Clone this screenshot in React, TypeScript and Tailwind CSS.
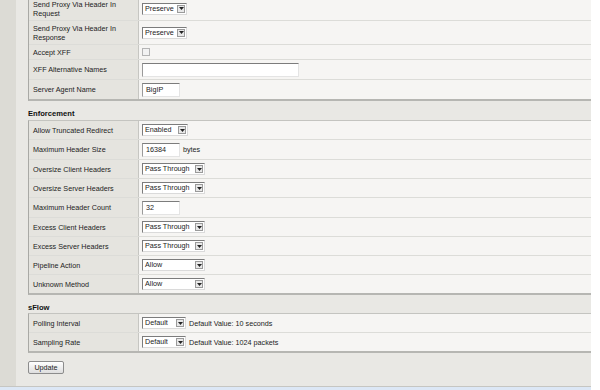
import React from "react";

type Field =
  | { kind: "select"; value: string; w: number }
  | { kind: "input"; value: string; w: number; suffix?: string }
  | { kind: "check" }
  | { kind: "selectNote"; value: string; note: string };

type Row = { label: string; h: number; field: Field };

const Arrow = () => (
  <svg width="5" height="3" viewBox="0 0 5 3">
    <polygon points="0,0 5,0 2.5,3" fill="#222" />
  </svg>
);

const Select = ({ value, w }: { value: string; w: number }) => (
  <div
    className="flex h-[12px] items-center bg-white border border-t-[#7c7c7c] border-l-[#7c7c7c] border-r-[#dadada] border-b-[#dadada]"
    style={{ width: w }}
  >
    <span className="flex-1 pl-[2px] leading-[10px] text-[#222]">{value}</span>
    <div className="mr-[1px] flex h-[8px] w-[8px] items-center justify-center border border-[#9a9a9a] bg-[#e8e8e8]">
      <Arrow />
    </div>
  </div>
);

const Input = ({ value, w }: { value: string; w: number }) => (
  <div
    className="flex h-[14px] items-center bg-white border border-t-[#7c7c7c] border-l-[#9a9a9a] border-r-[#e4e4e4] border-b-[#e4e4e4] pl-[3px] text-[#222]"
    style={{ width: w }}
  >
    {value}
  </div>
);

const FieldCell = ({ field }: { field: Field }) => {
  if (field.kind === "select") return <Select value={field.value} w={field.w} />;
  if (field.kind === "check")
    return <div className="h-[8px] w-[8px] border border-[#b4b4b4] bg-[#f2f2f2]" />;
  if (field.kind === "selectNote")
    return (
      <div className="flex items-center gap-[3px]">
        <Select value={field.value} w={44} />
        <span className="text-[#222]">{field.note}</span>
      </div>
    );
  return (
    <div className="flex items-center gap-[3px]">
      <Input value={field.value} w={field.w} />
      {field.suffix && <span className="text-[#222]">{field.suffix}</span>}
    </div>
  );
};

const Table = ({ rows, top }: { rows: Row[]; top?: boolean }) => (
  <div
    className={
      "border-l border-l-[#a9a9a5] border-b-2 border-b-[#b6b6b2] " +
      (top ? "border-t border-t-[#c4c4c0]" : "")
    }
  >
    {rows.map((r, i) => (
      <div
        key={r.label}
        className={
          "flex " + (i < rows.length - 1 ? "border-b border-[#dcdcd8]" : "")
        }
        style={{ height: r.h }}
      >
        <div className="flex w-[110px] shrink-0 items-center border-r border-[#c6c6c2] bg-[#e5e4df] pl-[4px] pr-[20px] text-[#222]">
          {r.label}
        </div>
        <div className="flex flex-1 items-center bg-[#f6f5f3] pl-[3px]">
          <FieldCell field={r.field} />
        </div>
      </div>
    ))}
  </div>
);

const general: Row[] = [
  { label: "Send Proxy Via Header In Request", h: 24, field: { kind: "select", value: "Preserve", w: 45 } },
  { label: "Send Proxy Via Header In Response", h: 24, field: { kind: "select", value: "Preserve", w: 45 } },
  { label: "Accept XFF", h: 15, field: { kind: "check" } },
  { label: "XFF Alternative Names", h: 20, field: { kind: "input", value: "", w: 157 } },
  { label: "Server Agent Name", h: 19, field: { kind: "input", value: "BigIP", w: 38 } },
];

const enforcement: Row[] = [
  { label: "Allow Truncated Redirect", h: 19, field: { kind: "select", value: "Enabled", w: 46 } },
  { label: "Maximum Header Size", h: 20, field: { kind: "input", value: "16384", w: 38, suffix: "bytes" } },
  { label: "Oversize Client Headers", h: 19, field: { kind: "select", value: "Pass Through", w: 63 } },
  { label: "Oversize Server Headers", h: 19, field: { kind: "select", value: "Pass Through", w: 63 } },
  { label: "Maximum Header Count", h: 20, field: { kind: "input", value: "32", w: 38 } },
  { label: "Excess Client Headers", h: 19, field: { kind: "select", value: "Pass Through", w: 63 } },
  { label: "Excess Server Headers", h: 19, field: { kind: "select", value: "Pass Through", w: 63 } },
  { label: "Pipeline Action", h: 19, field: { kind: "select", value: "Allow", w: 63 } },
  { label: "Unknown Method", h: 18, field: { kind: "select", value: "Allow", w: 63 } },
];

const sflow: Row[] = [
  { label: "Polling Interval", h: 19, field: { kind: "selectNote", value: "Default", note: "Default Value: 10 seconds" } },
  { label: "Sampling Rate", h: 18, field: { kind: "selectNote", value: "Default", note: "Default Value: 1024 packets" } },
];

export default function App() {
  return (
    <div className="h-[390px] w-[600px] overflow-hidden bg-white font-['Liberation_Sans',Arial,sans-serif] text-[7.2px] leading-[9px]">
      <div className="flex h-full w-[591px] flex-col">
        <div className="flex flex-1 overflow-hidden bg-[#e9e8e4]">
          <div className="w-[16px] shrink-0 bg-[#dcdbd5]" />
          <div className="flex-1 pl-[12px] -mt-[3px]">
            <Table rows={general} />
            <div className="flex h-[19px] items-end pb-[2px] font-bold text-[7.6px] text-[#111]">
              Enforcement
            </div>
            <Table rows={enforcement} top />
            <div className="flex h-[18px] items-end pb-[1px] font-bold text-[7.6px] text-[#111]">
              sFlow
            </div>
            <Table rows={sflow} top />
            <div className="pt-[8px]">
              <button className="flex h-[13px] w-[36px] items-center justify-center rounded-[2px] border border-[#8c8c8c] bg-gradient-to-b from-white to-[#dedede] text-[#222]">
                Update
              </button>
            </div>
          </div>
        </div>
        <div className="h-[4px] border-t border-[#c6c6c2] bg-[#dce7f5]" />
      </div>
    </div>
  );
}
